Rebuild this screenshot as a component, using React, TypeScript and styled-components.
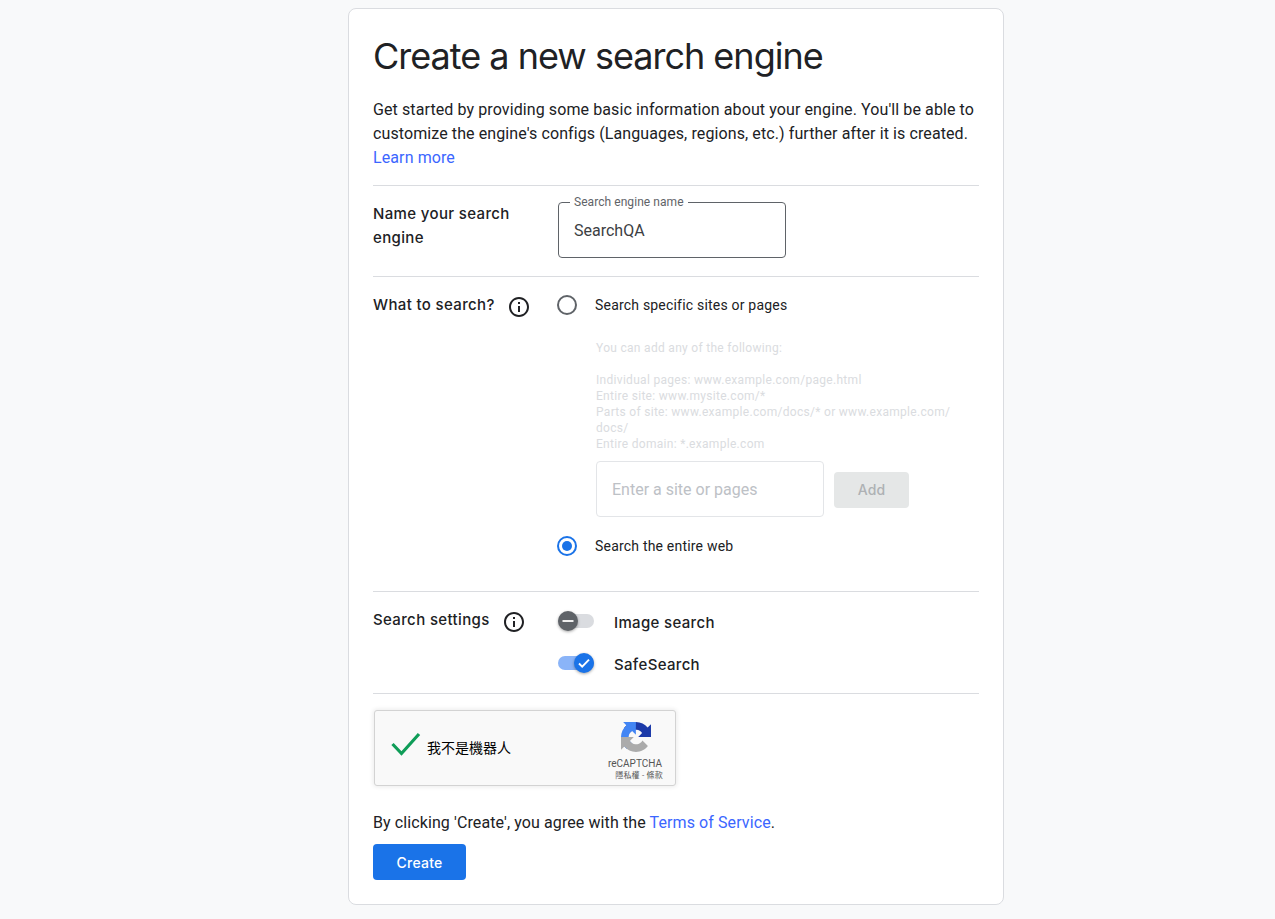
import React from "react";
import styled, { createGlobalStyle } from "styled-components";

const Global = createGlobalStyle`
  html, body { margin: 0; padding: 0; background: #f8f9fa; }
  body { padding: 8px 0 0 348px; font-family: Roboto, "Liberation Sans", sans-serif; color: #202124; }
  * { box-sizing: border-box; }
`;

const Card = styled.main`
  width: 656px;
  background: #fff;
  border: 1px solid #dadce0;
  border-radius: 8px;
  padding: 25px 24px 24px;
`;
const Title = styled.h1`
  margin: 0 0 20px;
  font: 400 36px/44px Inter, Lato, sans-serif;
  letter-spacing: -1px;
  color: #202124;
  white-space: nowrap;
`;
const Intro = styled.p`
  margin: 0;
  padding-bottom: 15px;
  font-size: 16px;
  line-height: 24px;
  letter-spacing: 0.1px;
  border-bottom: 1px solid #dadce0;
`;
const Link = styled.a`
  color: #3b66ff;
  text-decoration: none;
`;
const Row = styled.section<{ $pb: number }>`
  display: grid;
  grid-template-columns: 185px 1fr;
  padding: 15px 0 ${(p) => p.$pb}px;
  border-bottom: 1px solid #dadce0;
`;
const LabelCell = styled.div`
  display: flex;
  align-items: flex-start;
  gap: 12px;
`;
const RowLabel = styled.h2`
  margin: 1px 0 0;
  font: 500 15px/24px Inter, Roboto, sans-serif;
  letter-spacing: 0.36px;
  color: #202124;
`;
const InfoIcon = styled.svg`
  width: 24px;
  height: 24px;
  margin-top: 3px;
  fill: #202124;
  flex: none;
`;
const OutlinedField = styled.div`
  position: relative;
  margin-top: 1px;
  width: 228px;
  height: 56px;
  border: 1px solid #5f6368;
  border-radius: 4px;
  padding: 0 15px;
  display: flex;
  align-items: center;
  font-size: 16px;
  color: #3c4043;
`;
const FieldLabel = styled.span`
  position: absolute;
  left: 11px;
  top: -9px;
  padding: 0 4px;
  background: #fff;
  font-size: 12px;
  line-height: 16px;
  letter-spacing: 0.06px;
  color: #5f6368;
`;
const RadioRow = styled.div`
  display: flex;
  align-items: center;
  gap: 18px;
  margin-left: -1px;
  height: 20px;
  font-size: 14px;
  letter-spacing: 0.2px;
  color: #202124;
`;
const RadioCircle = styled.span<{ $on?: boolean }>`
  width: 20px;
  height: 20px;
  border-radius: 50%;
  border: 2px solid ${(p) => (p.$on ? "#1a73e8" : "#5f6368")};
  display: flex;
  align-items: center;
  justify-content: center;
  flex: none;
  &::after {
    content: "";
    width: 10px;
    height: 10px;
    border-radius: 50%;
    background: ${(p) => (p.$on ? "#1a73e8" : "transparent")};
  }
`;
const SearchColumn = styled.div`
  padding-top: 3px;
`;
const Disabled = styled.div`
  padding: 25px 0 19px 38px;
`;
const Help = styled.div`
  width: 360px;
  font-size: 12px;
  line-height: 16px;
  letter-spacing: 0.3px;
  color: #dadce0;
  margin-bottom: 9px;
`;
const AddRow = styled.div`
  display: flex;
  align-items: center;
  gap: 10px;
`;
const SiteField = styled.div`
  width: 228px;
  height: 56px;
  border: 1px solid #e3e5e8;
  border-radius: 4px;
  padding: 0 15px;
  display: flex;
  align-items: center;
  font-size: 16px;
  color: #bdc1c6;
`;
const Button = styled.button<{ $primary?: boolean }>`
  height: 36px;
  border: 0;
  border-radius: 4px;
  font: 500 14px Inter, Lato, sans-serif;
  letter-spacing: 0.2px;
  background: ${(p) => (p.$primary ? "#1a73e8" : "#e5e7e7")};
  color: ${(p) => (p.$primary ? "#fff" : "#aeb1b4")};
  width: ${(p) => (p.$primary ? 93 : 75)}px;
  margin-top: ${(p) => (p.$primary ? 0 : 1)}px;
`;
const ToggleList = styled.div`
  display: flex;
  flex-direction: column;
  gap: 18px;
  padding-top: 3px;
`;
const ToggleRow = styled.div`
  display: flex;
  align-items: center;
  height: 24px;
  gap: 20px;
  font: 500 15px/26px Inter, Roboto, sans-serif;
  letter-spacing: 0.33px;
  color: #202124;
`;
const Track = styled.span<{ $on?: boolean }>`
  position: relative;
  width: 36px;
  height: 14px;
  margin-top: -2px;
  border-radius: 7px;
  background: ${(p) => (p.$on ? "#8ab4f8" : "#dadce0")};
  flex: none;
`;
const Knob = styled.span<{ $on?: boolean }>`
  position: absolute;
  top: -3px;
  left: ${(p) => (p.$on ? 16 : 0)}px;
  width: 20px;
  height: 20px;
  border-radius: 50%;
  background: ${(p) => (p.$on ? "#1a73e8" : "#5f6368")};
  box-shadow: 0 1px 3px rgba(0, 0, 0, 0.35);
  display: flex;
  align-items: center;
  justify-content: center;
`;
const ToggleText = styled.span`
  padding-top: 2px;
`;
const Captcha = styled.div`
  margin: 16px 0 25px 1px;
  width: 302px;
  height: 76px;
  background: #f9f9f9;
  border: 1px solid #d3d3d3;
  border-radius: 3px;
  box-shadow: 0 0 4px 1px rgba(0, 0, 0, 0.08);
  display: flex;
  align-items: center;
  padding: 0 12px 0 16px;
`;
const CheckMark = styled.svg`
  width: 30px;
  height: 26px;
  margin-top: -6px;
  flex: none;
`;
const CaptchaText = styled.span`
  margin-left: 6px;
  font: 14px/20px Roboto, "Noto Sans CJK TC", sans-serif;
  color: #000;
`;
const CaptchaBrand = styled.div`
  margin-left: auto;
  width: 56px;
  display: flex;
  flex-direction: column;
  align-items: flex-end;
  align-self: flex-start;
  padding-top: 11px;
`;
const BrandMark = styled.svg`
  width: 30px;
  height: 30px;
  margin-right: 12px;
`;
const BrandName = styled.span`
  margin: 6px 1px 0 0;
  font: 10px/12px Roboto, sans-serif;
  color: #555;
  white-space: nowrap;
`;
const BrandLinks = styled.span`
  font: 8px/11px Roboto, "Noto Sans CJK TC", sans-serif;
  letter-spacing: 0.2px;
  color: #555;
  white-space: nowrap;
`;
const Terms = styled.p`
  margin: 0 0 9px;
  font-size: 16px;
  line-height: 24px;
  letter-spacing: 0.1px;
`;

const Info = () => (
  <InfoIcon viewBox="0 0 24 24">
    <path d="M11 7h2v2h-2zm0 4h2v6h-2zm1-9C6.48 2 2 6.48 2 12s4.48 10 10 10 10-4.48 10-10S17.52 2 12 2zm0 18c-4.41 0-8-3.59-8-8s3.59-8 8-8 8 3.59 8 8-3.59 8-8 8z" />
  </InfoIcon>
);

const RecaptchaLogo = () => (
  <BrandMark viewBox="0 0 64 64">
    <path fill="#1c3aa9" d="M64 31.955l-.033-1.37V4.687l-7.16 7.16C50.948 4.674 42.033.093 32.05.093c-10.4 0-19.622 4.96-25.458 12.64l11.736 11.86a15.55 15.55 0 0 1 4.754-5.334c2.05-1.6 4.952-2.906 8.968-2.906.485 0 .86.057 1.135.163 4.976.393 9.288 3.14 11.828 7.124l-8.307 8.307c10.522-.04 22.4-.066 27.295.005" />
    <path fill="#4285f4" d="M31.862.094l-1.37.033H4.594l7.16 7.16C4.58 13.147 0 22.06 0 32.046c0 10.4 4.96 19.622 12.64 25.458l11.86-11.736a15.55 15.55 0 0 1-5.334-4.754c-1.6-2.05-2.906-4.952-2.906-8.968 0-.485.057-.86.163-1.135.393-4.976 3.14-9.288 7.124-11.828l8.307 8.307c-.04-10.522-.066-22.4.005-27.295" />
    <path fill="#ababab" d="M.001 32.045l.033 1.37v25.898l7.16-7.16c5.86 7.173 14.774 11.754 24.76 11.754 10.4 0 19.622-4.96 25.458-12.64l-11.736-11.86a15.55 15.55 0 0 1-4.754 5.334c-2.05 1.6-4.952 2.906-8.968 2.906-.485 0-.86-.057-1.135-.163-4.976-.393-9.288-3.14-11.828-7.124l8.307-8.307c-10.522.04-22.4.066-27.295-.005" />
  </BrandMark>
);

export default function App() {
  return (
    <>
      <Global />
      <Card>
        <Title>Create a new search engine</Title>
        <Intro>
          Get started by providing some basic information about your engine. You'll be able to
          customize the engine's configs (Languages, regions, etc.) further after it is created.{" "}
          <Link href="#">Learn more</Link>
        </Intro>
        <Row $pb={18}>
          <LabelCell>
            <RowLabel>
              Name your search
              <br />
              engine
            </RowLabel>
          </LabelCell>
          <OutlinedField>
            <FieldLabel>Search engine name</FieldLabel>
            SearchQA
          </OutlinedField>
        </Row>
        <Row $pb={35}>
          <LabelCell>
            <RowLabel>What to search?</RowLabel>
            <Info />
          </LabelCell>
          <SearchColumn>
            <RadioRow>
              <RadioCircle />
              Search specific sites or pages
            </RadioRow>
            <Disabled>
              <Help>
                You can add any of the following:
                <br />
                <br />
                Individual pages: www.example.com/page.html
                <br />
                Entire site: www.mysite.com/*
                <br />
                Parts of site: www.example.com/docs/* or www.example.com/<wbr />docs/
                <br />
                Entire domain: *.example.com
              </Help>
              <AddRow>
                <SiteField>Enter a site or pages</SiteField>
                <Button>Add</Button>
              </AddRow>
            </Disabled>
            <RadioRow>
              <RadioCircle $on />
              Search the entire web
            </RadioRow>
          </SearchColumn>
        </Row>
        <Row $pb={17}>
          <LabelCell>
            <RowLabel>Search settings</RowLabel>
            <Info />
          </LabelCell>
          <ToggleList>
            <ToggleRow>
              <Track>
                <Knob>
                  <svg width="12" height="12" viewBox="0 0 12 12">
                    <path d="M0.5 6h11" stroke="#fff" strokeWidth="1.8" />
                  </svg>
                </Knob>
              </Track>
              <ToggleText>Image search</ToggleText>
            </ToggleRow>
            <ToggleRow>
              <Track $on>
                <Knob $on>
                  <svg width="14" height="14" viewBox="0 0 14 14">
                    <path d="M2 7.5l3.2 3.2L12 3.6" fill="none" stroke="#fff" strokeWidth="1.9" />
                  </svg>
                </Knob>
              </Track>
              <ToggleText>SafeSearch</ToggleText>
            </ToggleRow>
          </ToggleList>
        </Row>
        <Captcha>
          <CheckMark viewBox="0 0 30 26">
            <path d="M1.5 12L10.5 21.5L28 2" fill="none" stroke="#0f9d58" strokeWidth="3.2" />
          </CheckMark>
          <CaptchaText>我不是機器人</CaptchaText>
          <CaptchaBrand>
            <RecaptchaLogo />
            <BrandName>reCAPTCHA</BrandName>
            <BrandLinks>隱私權 - 條款</BrandLinks>
          </CaptchaBrand>
        </Captcha>
        <Terms>
          By clicking 'Create', you agree with the <Link href="#">Terms of Service</Link>.
        </Terms>
        <Button $primary>Create</Button>
      </Card>
    </>
  );
}
